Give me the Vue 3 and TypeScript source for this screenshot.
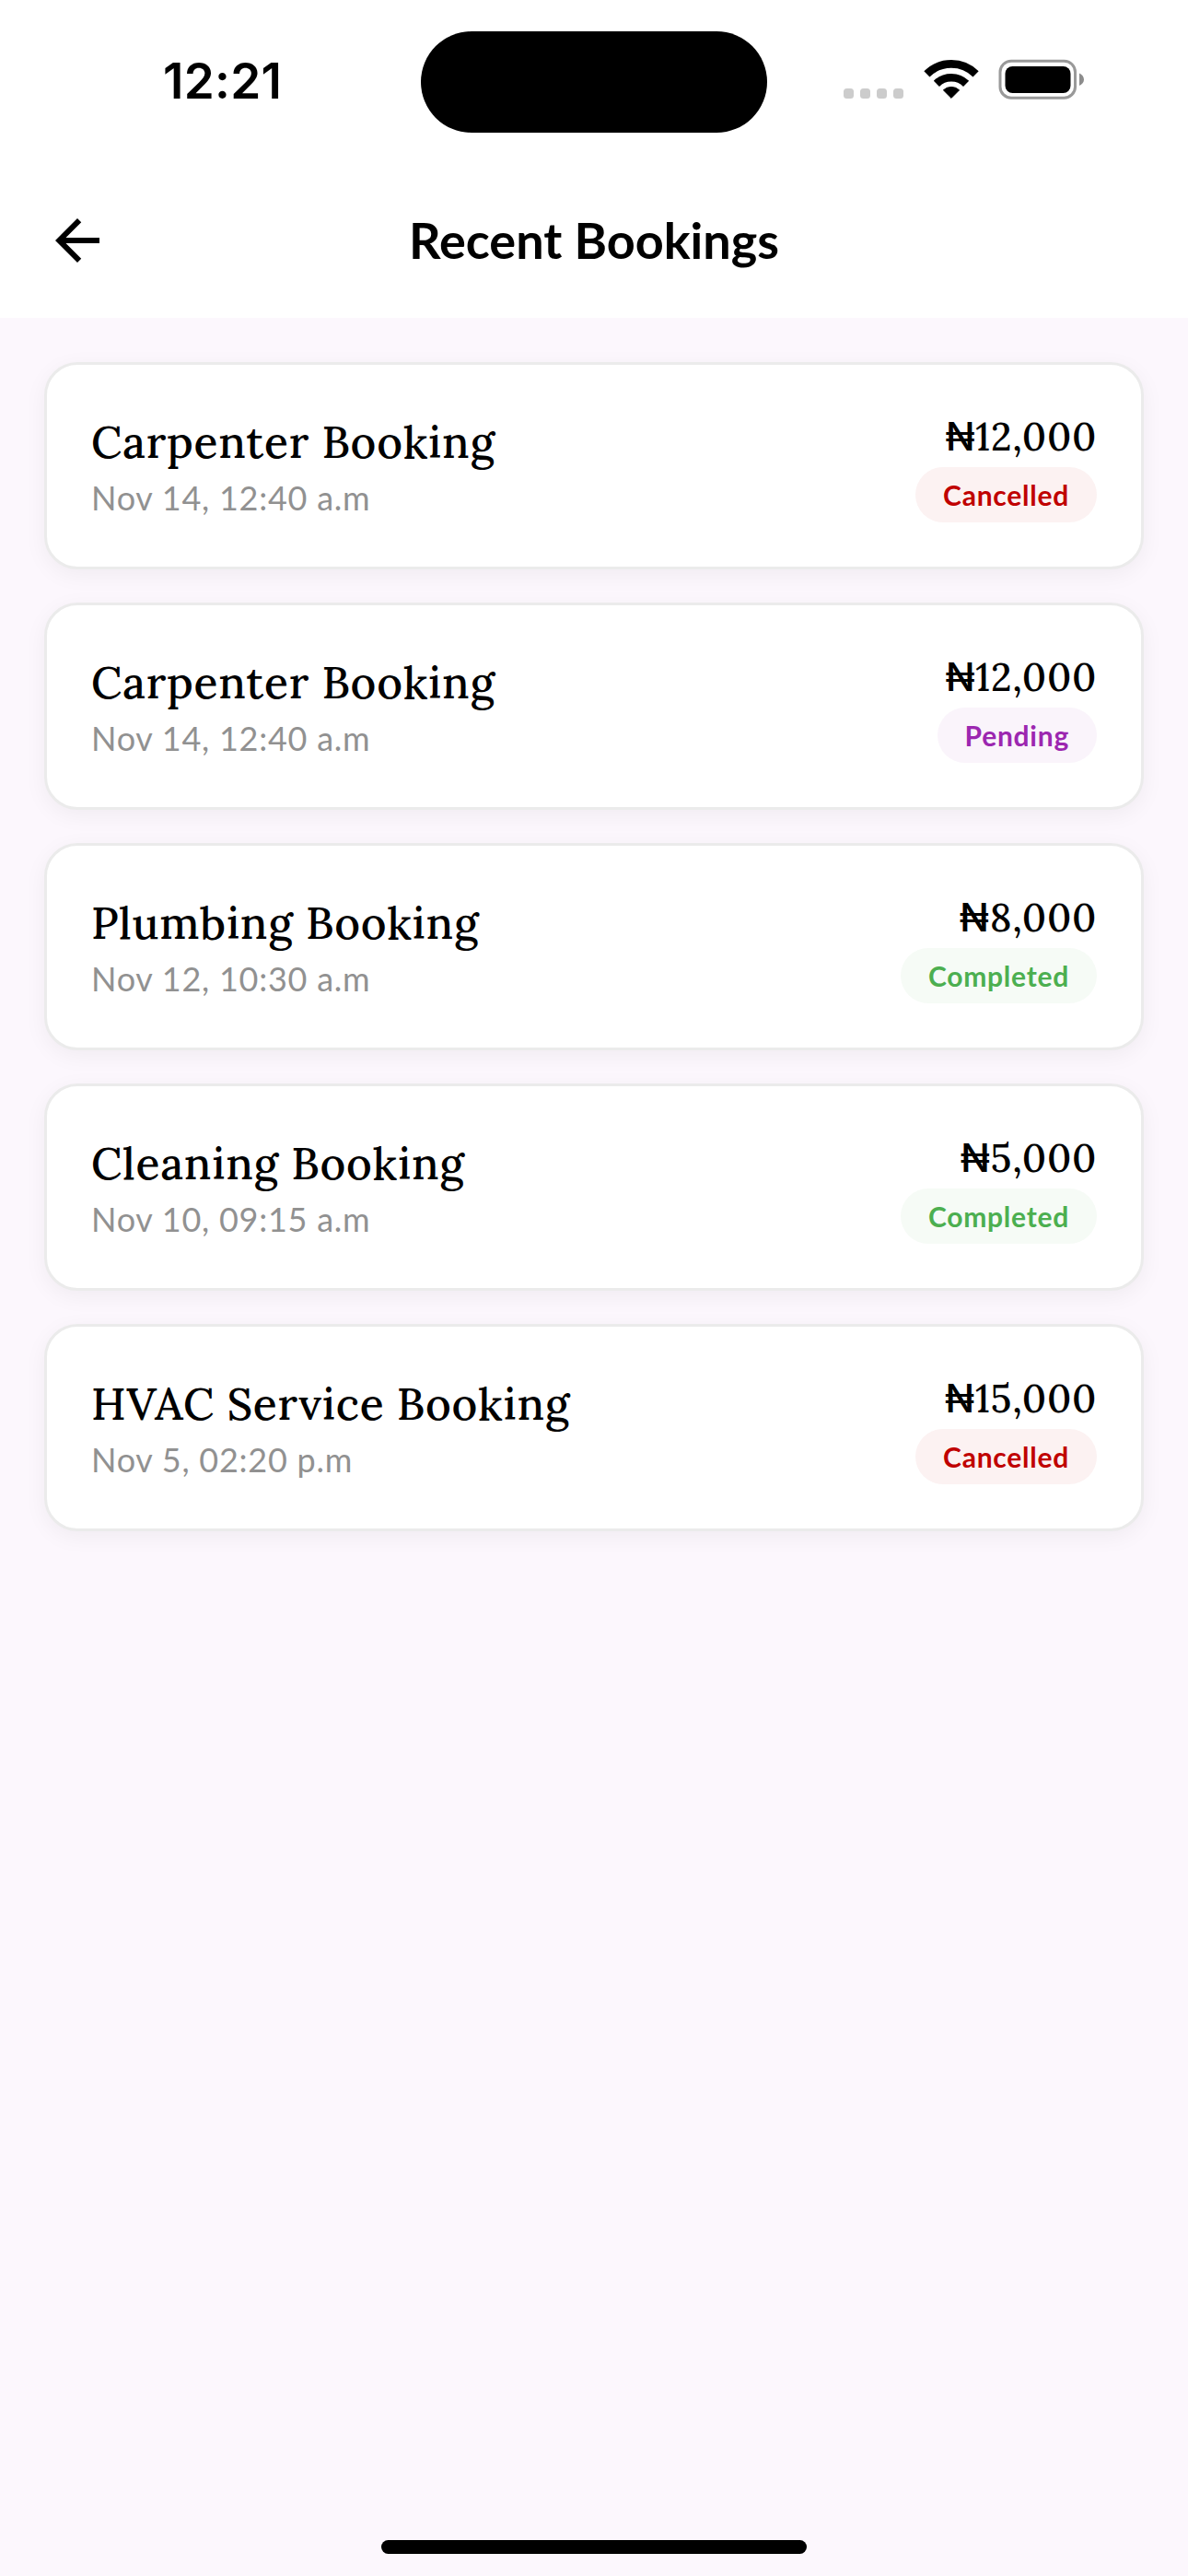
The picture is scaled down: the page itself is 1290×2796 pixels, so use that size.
<script setup lang="ts">
type Status = 'Cancelled' | 'Pending' | 'Completed'

interface Booking {
  id: number
  title: string
  date: string
  amount: string
  status: Status
}

const bookings: Booking[] = [
  { id: 1, title: 'Carpenter Booking', date: 'Nov 14, 12:40 a.m', amount: '12,000', status: 'Cancelled' },
  { id: 2, title: 'Carpenter Booking', date: 'Nov 14, 12:40 a.m', amount: '12,000', status: 'Pending' },
  { id: 3, title: 'Plumbing Booking', date: 'Nov 12, 10:30 a.m', amount: '8,000', status: 'Completed' },
  { id: 4, title: 'Cleaning Booking', date: 'Nov 10, 09:15 a.m', amount: '5,000', status: 'Completed' },
  { id: 5, title: 'HVAC Service Booking', date: 'Nov 5, 02:20 p.m', amount: '15,000', status: 'Cancelled' },
]
</script>

<template>
  <div class="screen">
    <div class="status-bar">
      <div class="time">12:21</div>
      <div class="island"></div>
      <div class="indicators">
        <div class="signal"><i v-for="n in 4" :key="n"></i></div>
        <svg class="wifi" width="60" height="44" viewBox="0 0 60 44">
          <path d="M3.4 16.4A37.6 37.6 0 0 1 56.6 16.4M13.9 26.9A22.8 22.8 0 0 1 46.1 26.9" fill="none" stroke="#000" stroke-width="8.7" />
          <path d="M30 42.4L21.4 33.8A12.6 12.6 0 0 1 38.6 33.8Z" stroke="#000" stroke-width="1" stroke-linejoin="round" />
        </svg>
        <svg class="battery" width="94" height="44" viewBox="0 0 94 44">
          <rect x="2" y="2.2" width="81.5" height="40" rx="12" fill="none" stroke="#999" stroke-width="3" />
          <rect x="7.5" y="8" width="71" height="29" rx="8" />
          <path d="M88 15.5C91 16.8 93 19.3 93 22.3S91 27.8 88 29.1Z" fill="#8c8c8c" />
        </svg>
      </div>
    </div>

    <header class="app-bar">
      <svg class="back" width="72" height="72" viewBox="0 0 24 24">
        <path d="M20 11H7.83l5.59-5.59L12 4l-8 8 8 8 1.41-1.41L7.83 13H20v-2z" />
      </svg>
      <h1>Recent Bookings</h1>
    </header>

    <main class="list">
      <article v-for="b in bookings" :key="b.id" class="card">
        <div class="info">
          <h2>{{ b.title }}</h2>
          <p>{{ b.date }}</p>
        </div>
        <div class="meta">
          <div class="amount"><span class="naira">₦</span>{{ b.amount }}</div>
          <span class="chip" :class="b.status.toLowerCase()">{{ b.status }}</span>
        </div>
      </article>
    </main>

    <div class="home-indicator"></div>
  </div>
</template>

<style>
body {
  margin: 0;
}
</style>

<style scoped>
.screen {
  box-sizing: border-box;
  width: 1290px;
  height: 2796px;
  overflow: hidden;
  display: flex;
  flex-direction: column;
  background: #fcf7fd;
  color: #000;
  font-family: Lato, sans-serif;
}
.status-bar {
  display: flex;
  height: 177px;
  flex: none;
  background: #fff;
}
.time {
  box-sizing: border-box;
  width: 457px;
  padding: 56px 0 0 177px;
  font: 600 53px/64px Inter, sans-serif;
  letter-spacing: 0.3px;
}
.island {
  width: 376px;
  height: 110.5px;
  margin-top: 33.5px;
  border-radius: 56px;
  background: #000;
}
.indicators {
  display: flex;
  align-items: flex-end;
  height: 44px;
  margin: 64px 0 0 83px;
}
.signal {
  display: flex;
  gap: 7px;
  margin-bottom: 1px;
}
.signal i {
  width: 11px;
  height: 11px;
  border-radius: 3.5px;
  background: #ccc;
}
.wifi {
  margin-left: 21.5px;
}
.battery {
  margin-left: 21px;
}
.app-bar {
  display: grid;
  grid-template-columns: 72px 1fr 72px;
  align-items: center;
  box-sizing: border-box;
  height: 168px;
  flex: none;
  padding: 0 48px;
  background: #fff;
}
h1 {
  margin: 0;
  font-size: 54px;
  line-height: 66px;
  font-weight: 700;
  text-align: center;
}
.list {
  display: flex;
  flex-direction: column;
  flex: 1;
  gap: 36px;
  padding: 48px;
}
.card {
  box-sizing: border-box;
  display: flex;
  justify-content: space-between;
  height: 225px;
  padding: 48px;
  border: 3px solid #ebebeb;
  border-radius: 36px;
  background: #fff;
  box-shadow: 0 6px 24px rgba(0, 0, 0, 0.05);
}
h2 {
  margin: 0;
  font: 500 48px/72px Lora, "Liberation Serif", serif;
  letter-spacing: 0.75px;
}
p {
  margin: 0;
  font-size: 36px;
  line-height: 48px;
  letter-spacing: 0.75px;
  color: #919191;
}
.meta {
  display: flex;
  flex-direction: column;
  align-items: flex-end;
}
.amount {
  height: 63px;
  font: 500 42px/60px Lora, "Liberation Serif", serif;
  letter-spacing: 0.75px;
}
.naira {
  font-family: Inter, sans-serif;
  font-size: 42px;
  line-height: 0;
}
.chip {
  height: 60px;
  padding: 0 30px;
  border-radius: 30px;
  font-size: 30px;
  line-height: 60px;
  font-weight: 700;
  letter-spacing: 0.75px;
}
.cancelled {
  color: #c00000;
  background: #fcf2f2;
}
.pending {
  color: #9c27b0;
  background: #faf4fb;
}
.completed {
  color: #4caf50;
  background: #f6fbf6;
}
.home-indicator {
  width: 462px;
  height: 15px;
  flex: none;
  margin: 0 auto 24px;
  border-radius: 8px;
  background: #000;
}
</style>
